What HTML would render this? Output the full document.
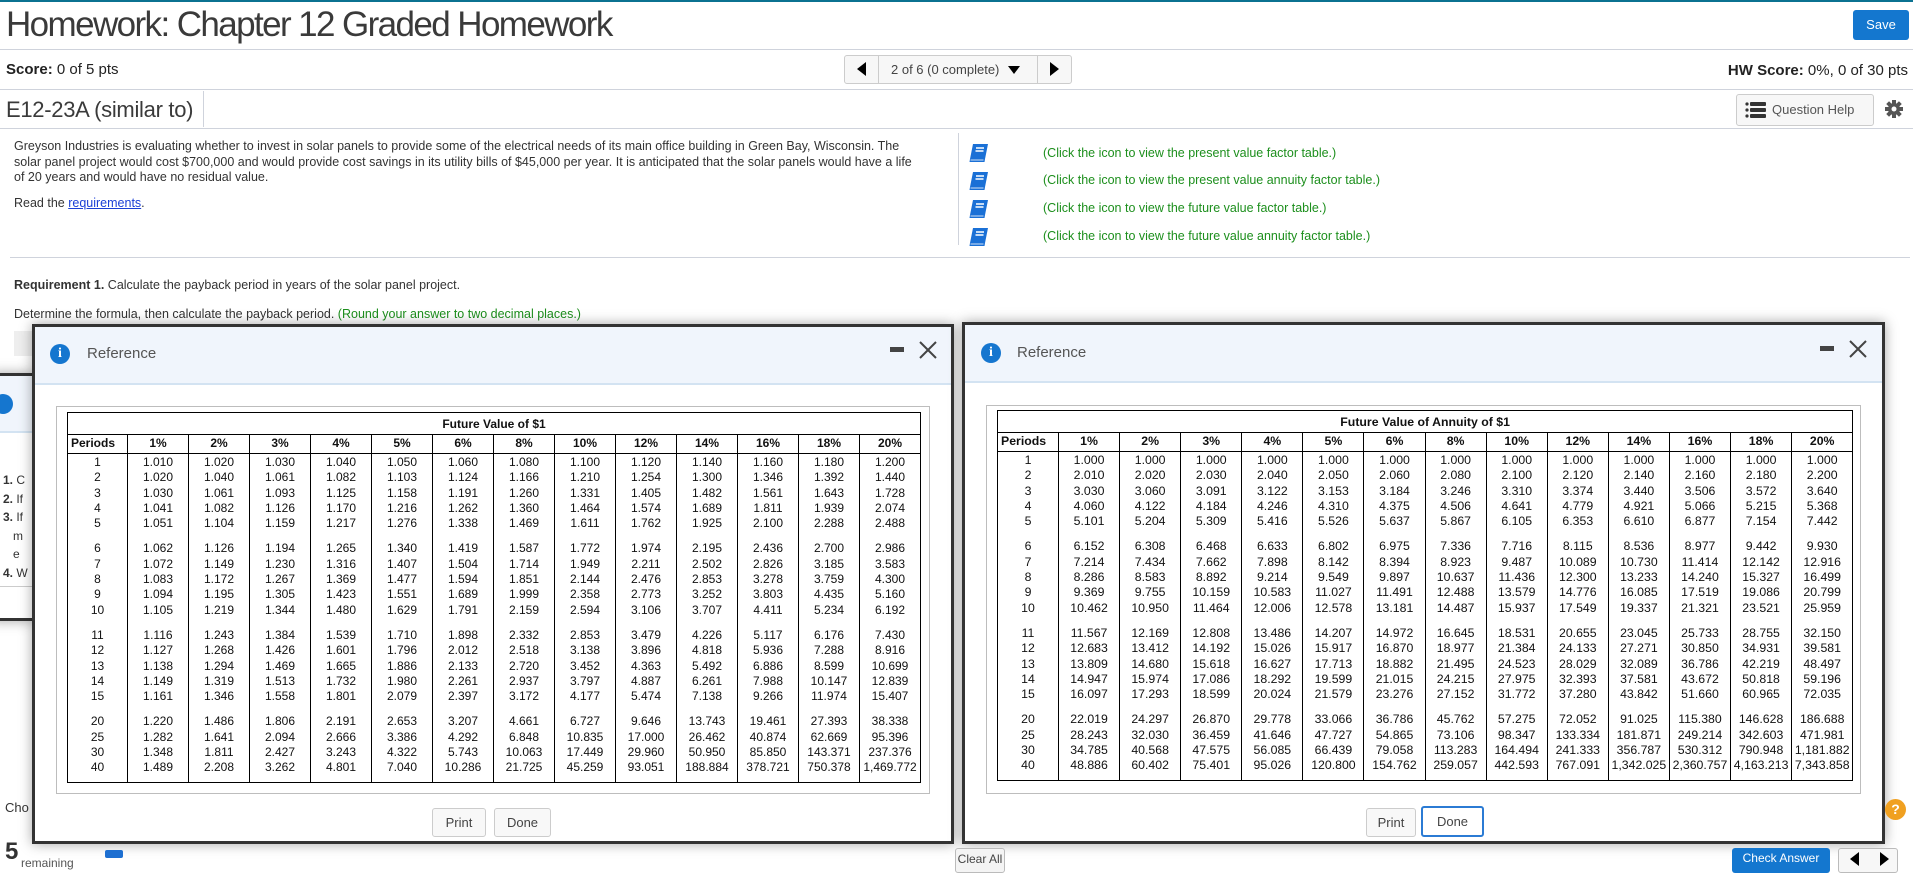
<!DOCTYPE html>
<html><head><meta charset="utf-8">
<style>
*{box-sizing:border-box;margin:0;padding:0}
body{width:1913px;height:869px;position:relative;overflow:hidden;background:#fff;font-family:"Liberation Sans",Arial,sans-serif;color:#333}
.a{position:absolute}
.hl{position:absolute;left:0;width:1913px;height:1px;background:#cfd3dc}
.modal{position:absolute;background:#fff;border:3px solid #333;box-shadow:0 0 12px rgba(0,0,0,.35)}
.mh{position:absolute;left:0;right:0;top:0;height:58px;background:#f0f5fc;border-bottom:2px solid #d3e3f2}
.info{position:absolute;width:20px;height:20px;border-radius:50%;background:#1576cf;color:#fff;font:bold 14px "Liberation Serif",serif;text-align:center;line-height:20px}
.ref{position:absolute;font-size:15px;color:#555}
.gbox{position:absolute;border:1px solid #bdbdbd;background:#fff}
table.t{position:absolute;border-collapse:collapse;table-layout:fixed;border:1.5px solid #000}
table.t td{border-left:1px solid #000;border-right:1px solid #000;text-align:center;vertical-align:top;color:#111;padding:5px 0;white-space:nowrap}
table.t tr.ti td{font-weight:bold;height:22px;padding:4px 0 0;border-bottom:1px solid #000}
table.t tr.hd td{font-weight:bold;height:19px;padding:1px 0 0;border-bottom:1px solid #000}
.btn{position:absolute;border:1px solid #ccc;background:#f8f8f8;border-radius:3px;font-size:13px;color:#444;text-align:center;line-height:27px;height:29px}
.green{position:absolute;color:#1d8f1d;font-size:12.5px}
.book{position:absolute;width:22px;height:20px}
</style></head><body>
<div class="a" style="left:0;top:0;width:1913px;height:2px;background:#0b7291"></div>
<div class="a" style="left:6px;top:5px;font-size:35px;color:#3a3a3a;letter-spacing:-1.6px">Homework: Chapter 12 Graded Homework</div>
<div class="a" style="left:1853px;top:10px;width:56px;height:30px;background:#1477cf;border-radius:3px;color:#fff;font-size:13px;text-align:center;line-height:30px">Save</div>
<div class="hl" style="top:49px"></div>
<div class="a" style="left:6px;top:61px;font-size:15px;color:#222"><b>Score:</b> 0 of 5 pts</div>
<div class="a" style="left:844px;top:55px;width:228px;height:29px;border:1px solid #ccc;border-radius:3px;background:#f7f7f7"></div>
<div class="a" style="left:878px;top:56px;width:1px;height:27px;background:#ccc"></div>
<div class="a" style="left:1037px;top:56px;width:1px;height:27px;background:#ccc"></div>
<div class="a" style="left:857px;top:62px;width:0;height:0;border-top:7px solid transparent;border-bottom:7px solid transparent;border-right:9px solid #000"></div>
<div class="a" style="left:1050px;top:62px;width:0;height:0;border-top:7px solid transparent;border-bottom:7px solid transparent;border-left:9px solid #000"></div>
<div class="a" style="left:891px;top:62px;font-size:13px;color:#444">2 of 6 (0 complete)</div>
<div class="a" style="left:1008px;top:66px;width:0;height:0;border-left:6px solid transparent;border-right:6px solid transparent;border-top:8px solid #000"></div>
<div class="a" style="right:5px;top:62px;font-size:15px;color:#222"><b>HW Score:</b> 0%, 0 of 30 pts</div>
<div class="hl" style="top:89px"></div>
<div class="a" style="left:6px;top:97px;font-size:22px;color:#3a3a3a;letter-spacing:-0.3px">E12-23A (similar to)</div>
<div class="a" style="left:203px;top:91px;width:1px;height:36px;background:#cfd3dc"></div>
<div class="a" style="left:1736px;top:94px;width:138px;height:32px;border:1px solid #ccc;border-radius:3px;background:#f7f7f7"></div>
<svg class="a" style="left:1745px;top:102px" width="22" height="16"><g fill="#333"><circle cx="2" cy="2" r="1.6"/><circle cx="2" cy="8" r="1.6"/><circle cx="2" cy="14" r="1.6"/><rect x="5" y="0" width="16" height="4" rx="1"/><rect x="5" y="6" width="16" height="4" rx="1"/><rect x="5" y="12" width="16" height="4" rx="1"/></g></svg>
<div class="a" style="left:1772px;top:102px;font-size:13px;color:#555">Question Help</div>
<svg class="a" style="left:1885px;top:100px" width="18" height="18" viewBox="0 0 18 18"><g fill="#555"><circle cx="9" cy="9" r="6"/><rect x="7" y="0" width="4" height="18"/><rect x="0" y="7" width="18" height="4"/><rect x="7" y="0" width="4" height="18" transform="rotate(45 9 9)"/><rect x="7" y="0" width="4" height="18" transform="rotate(-45 9 9)"/></g><circle cx="9" cy="9" r="2.5" fill="#fff"/></svg>
<div class="hl" style="top:128px"></div>
<div class="a" style="left:14px;top:139px;width:960px;font-size:12.5px;line-height:15.5px;color:#333;white-space:nowrap">Greyson Industries is evaluating whether to invest in solar panels to provide some of the electrical needs of its main office building in Green Bay, Wisconsin. The<br>solar panel project would cost $700,000 and would provide cost savings in its utility bills of $45,000 per year. It is anticipated that the solar panels would have a life<br>of 20 years and would have no residual value.</div>
<div class="a" style="left:14px;top:196px;font-size:12.5px;color:#333">Read the <span style="color:#1a3fd6;text-decoration:underline">requirements</span>.</div>
<div class="a" style="left:958px;top:133px;width:1px;height:112px;background:#cfd3dc"></div>
<svg class="book" style="left:968px;top:143px" viewBox="0 0 22 20"><path d="M5 1h15l-3 15H2z" fill="#1a70d6"/><path d="M2 16h15l-.5 3H1.5z" fill="#1a70d6"/><path d="M2.5 17h13" stroke="#fff" stroke-width=".8"/><path d="M8 5h8M7.5 8h8" stroke="#fff" stroke-width="1.5"/></svg>
<svg class="book" style="left:968px;top:171px" viewBox="0 0 22 20"><path d="M5 1h15l-3 15H2z" fill="#1a70d6"/><path d="M2 16h15l-.5 3H1.5z" fill="#1a70d6"/><path d="M2.5 17h13" stroke="#fff" stroke-width=".8"/><path d="M8 5h8M7.5 8h8" stroke="#fff" stroke-width="1.5"/></svg>
<svg class="book" style="left:968px;top:199px" viewBox="0 0 22 20"><path d="M5 1h15l-3 15H2z" fill="#1a70d6"/><path d="M2 16h15l-.5 3H1.5z" fill="#1a70d6"/><path d="M2.5 17h13" stroke="#fff" stroke-width=".8"/><path d="M8 5h8M7.5 8h8" stroke="#fff" stroke-width="1.5"/></svg>
<svg class="book" style="left:968px;top:227px" viewBox="0 0 22 20"><path d="M5 1h15l-3 15H2z" fill="#1a70d6"/><path d="M2 16h15l-.5 3H1.5z" fill="#1a70d6"/><path d="M2.5 17h13" stroke="#fff" stroke-width=".8"/><path d="M8 5h8M7.5 8h8" stroke="#fff" stroke-width="1.5"/></svg>
<div class="green" style="left:1043px;top:146px">(Click the icon to view the present value factor table.)</div>
<div class="green" style="left:1043px;top:173px">(Click the icon to view the present value annuity factor table.)</div>
<div class="green" style="left:1043px;top:201px">(Click the icon to view the future value factor table.)</div>
<div class="green" style="left:1043px;top:229px">(Click the icon to view the future value annuity factor table.)</div>
<div class="a" style="left:10px;top:257px;width:1900px;height:1px;background:#cfd3dc"></div>
<div class="a" style="left:14px;top:278px;font-size:12.5px;color:#333"><b>Requirement 1.</b> Calculate the payback period in years of the solar panel project.</div>
<div class="a" style="left:14px;top:307px;font-size:12.5px;color:#333">Determine the formula, then calculate the payback period. <span style="color:#1d8f1d">(Round your answer to two decimal places.)</span></div>
<div class="a" style="left:14px;top:331px;width:20px;height:25px;background:#eee"></div>

<!-- behind modal -->
<div class="modal" style="left:-10px;top:373px;width:45px;height:248px;border-width:3px">
 <div class="mh" style="height:57px"></div>
 <div class="info" style="left:0;top:18px"></div>
 <div class="a" style="left:10px;top:95px;font-size:12px;line-height:18.5px;color:#333"><b>1.</b> C<br><b>2.</b> If<br><b>3.</b> If<br>&nbsp;&nbsp;&nbsp;m<br>&nbsp;&nbsp;&nbsp;e<br><b>4.</b> W</div>
 <div class="a" style="left:0;top:210px;width:40px;height:1px;background:#ccc"></div>
</div>

<!-- left modal -->
<div class="modal" style="left:32px;top:324px;width:922px;height:520px">
 <div class="mh"></div>
 <div class="info" style="left:15px;top:17px">i</div>
 <div class="ref" style="left:52px;top:18px">Reference</div>
 <div class="a" style="left:855px;top:20px;width:14px;height:5px;background:#444"></div>
 <svg class="a" style="left:884px;top:14px" width="18" height="18"><path d="M1 1L17 17M17 1L1 17" stroke="#444" stroke-width="2"/></svg>
 <div class="btn" style="left:397px;top:481px;width:54px">Print</div>
 <div class="btn" style="left:459px;top:481px;width:57px">Done</div>
</div>
<div class="gbox" style="left:56px;top:406px;width:874px;height:388px"></div>
<div id="t1"></div>

<!-- right modal -->
<div class="modal" style="left:962px;top:322px;width:923px;height:522px">
 <div class="mh"></div>
 <div class="info" style="left:16px;top:18px">i</div>
 <div class="ref" style="left:52px;top:19px">Reference</div>
 <div class="a" style="left:855px;top:21px;width:14px;height:5px;background:#444"></div>
 <svg class="a" style="left:884px;top:15px" width="18" height="18"><path d="M1 1L17 17M17 1L1 17" stroke="#444" stroke-width="2"/></svg>
 <div class="btn" style="left:401px;top:483px;width:50px">Print</div>
 <div class="btn" style="left:456px;top:481px;width:63px;height:31px;border:2px solid #2b7bd4;background:#fff">Done</div>
</div>
<div class="gbox" style="left:986px;top:405px;width:875px;height:389px"></div>
<div id="t2"></div>

<!-- bottom -->
<div class="a" style="left:5px;top:800px;font-size:13px;color:#333">Cho</div>
<div class="a" style="left:1885px;top:799px;width:21px;height:21px;border-radius:50%;background:#f0a020;color:#fff;font-size:14px;font-weight:bold;text-align:center;line-height:21px">?</div>
<div class="a" style="left:5px;top:838px;font-size:24px;font-weight:bold;color:#333">5</div>
<div class="a" style="left:21px;top:856px;font-size:12px;color:#555">remaining</div>
<div class="a" style="left:105px;top:850px;width:18px;height:8px;background:#1d6fd1;border-radius:2px"></div>
<div class="a" style="left:955px;top:848px;width:50px;height:25px;border:1px solid #bbb;background:#f4f4f4;border-radius:3px;font-size:12px;color:#444;text-align:center;line-height:20px;overflow:hidden">Clear All</div>
<div class="a" style="left:1732px;top:848px;width:98px;height:25px;background:#1477cf;border-radius:3px;color:#fff;font-size:12px;text-align:center;line-height:20px;overflow:hidden">Check Answer</div>
<div class="a" style="left:1838px;top:848px;width:60px;height:25px;border:1px solid #bbb;background:#f7f7f7;border-radius:3px"></div>
<div class="a" style="left:1850px;top:852px;width:0;height:0;border-top:7px solid transparent;border-bottom:7px solid transparent;border-right:9px solid #000"></div>
<div class="a" style="left:1880px;top:852px;width:0;height:0;border-top:7px solid transparent;border-bottom:7px solid transparent;border-left:9px solid #000"></div>

<script>
var P=[1,2,3,4,5,6,7,8,9,10,11,12,13,14,15,20,25,30,40];
var R=["1%","2%","3%","4%","5%","6%","8%","10%","12%","14%","16%","18%","20%"];
var A=`1.010 1.020 1.030 1.040 1.050 1.060 1.080 1.100 1.120 1.140 1.160 1.180 1.200
1.020 1.040 1.061 1.082 1.103 1.124 1.166 1.210 1.254 1.300 1.346 1.392 1.440
1.030 1.061 1.093 1.125 1.158 1.191 1.260 1.331 1.405 1.482 1.561 1.643 1.728
1.041 1.082 1.126 1.170 1.216 1.262 1.360 1.464 1.574 1.689 1.811 1.939 2.074
1.051 1.104 1.159 1.217 1.276 1.338 1.469 1.611 1.762 1.925 2.100 2.288 2.488
1.062 1.126 1.194 1.265 1.340 1.419 1.587 1.772 1.974 2.195 2.436 2.700 2.986
1.072 1.149 1.230 1.316 1.407 1.504 1.714 1.949 2.211 2.502 2.826 3.185 3.583
1.083 1.172 1.267 1.369 1.477 1.594 1.851 2.144 2.476 2.853 3.278 3.759 4.300
1.094 1.195 1.305 1.423 1.551 1.689 1.999 2.358 2.773 3.252 3.803 4.435 5.160
1.105 1.219 1.344 1.480 1.629 1.791 2.159 2.594 3.106 3.707 4.411 5.234 6.192
1.116 1.243 1.384 1.539 1.710 1.898 2.332 2.853 3.479 4.226 5.117 6.176 7.430
1.127 1.268 1.426 1.601 1.796 2.012 2.518 3.138 3.896 4.818 5.936 7.288 8.916
1.138 1.294 1.469 1.665 1.886 2.133 2.720 3.452 4.363 5.492 6.886 8.599 10.699
1.149 1.319 1.513 1.732 1.980 2.261 2.937 3.797 4.887 6.261 7.988 10.147 12.839
1.161 1.346 1.558 1.801 2.079 2.397 3.172 4.177 5.474 7.138 9.266 11.974 15.407
1.220 1.486 1.806 2.191 2.653 3.207 4.661 6.727 9.646 13.743 19.461 27.393 38.338
1.282 1.641 2.094 2.666 3.386 4.292 6.848 10.835 17.000 26.462 40.874 62.669 95.396
1.348 1.811 2.427 3.243 4.322 5.743 10.063 17.449 29.960 50.950 85.850 143.371 237.376
1.489 2.208 3.262 4.801 7.040 10.286 21.725 45.259 93.051 188.884 378.721 750.378 1,469.772`;
var B=`1.000 1.000 1.000 1.000 1.000 1.000 1.000 1.000 1.000 1.000 1.000 1.000 1.000
2.010 2.020 2.030 2.040 2.050 2.060 2.080 2.100 2.120 2.140 2.160 2.180 2.200
3.030 3.060 3.091 3.122 3.153 3.184 3.246 3.310 3.374 3.440 3.506 3.572 3.640
4.060 4.122 4.184 4.246 4.310 4.375 4.506 4.641 4.779 4.921 5.066 5.215 5.368
5.101 5.204 5.309 5.416 5.526 5.637 5.867 6.105 6.353 6.610 6.877 7.154 7.442
6.152 6.308 6.468 6.633 6.802 6.975 7.336 7.716 8.115 8.536 8.977 9.442 9.930
7.214 7.434 7.662 7.898 8.142 8.394 8.923 9.487 10.089 10.730 11.414 12.142 12.916
8.286 8.583 8.892 9.214 9.549 9.897 10.637 11.436 12.300 13.233 14.240 15.327 16.499
9.369 9.755 10.159 10.583 11.027 11.491 12.488 13.579 14.776 16.085 17.519 19.086 20.799
10.462 10.950 11.464 12.006 12.578 13.181 14.487 15.937 17.549 19.337 21.321 23.521 25.959
11.567 12.169 12.808 13.486 14.207 14.972 16.645 18.531 20.655 23.045 25.733 28.755 32.150
12.683 13.412 14.192 15.026 15.917 16.870 18.977 21.384 24.133 27.271 30.850 34.931 39.581
13.809 14.680 15.618 16.627 17.713 18.882 21.495 24.523 28.029 32.089 36.786 42.219 48.497
14.947 15.974 17.086 18.292 19.599 21.015 24.215 27.975 32.393 37.581 43.672 50.818 59.196
16.097 17.293 18.599 20.024 21.579 23.276 27.152 31.772 37.280 43.842 51.660 60.965 72.035
22.019 24.297 26.870 29.778 33.066 36.786 45.762 57.275 72.052 91.025 115.380 146.628 186.688
28.243 32.030 36.459 41.646 47.727 54.865 73.106 98.347 133.334 181.871 249.214 342.603 471.981
34.785 40.568 47.575 56.085 66.439 79.058 113.283 164.494 241.333 356.787 530.312 790.948 1,181.882
48.886 60.402 75.401 95.026 120.800 154.762 259.057 442.593 767.091 1,342.025 2,360.757 4,163.213 7,343.858`;
function build(id,txt,title,left,top,pw,cw,fs){
 var rows=txt.trim().split("\n").map(function(l){return l.trim().split(/\s+/)});
 var groups=[[0,5],[5,10],[10,15],[15,19]];
 var h='<table class="t" style="left:'+left+'px;top:'+top+'px;width:'+(pw+13*cw)+'px;font-size:'+fs+'px;line-height:15.3px"><colgroup><col style="width:'+pw+'px">';
 for(var i=0;i<13;i++)h+='<col style="width:'+cw+'px">';
 h+='</colgroup><tr class="ti"><td colspan="14" style="border-left:none;border-right:none">'+title+'</td></tr><tr class="hd"><td style="text-align:left;padding-left:3px">Periods</td>';
 R.forEach(function(r){h+='<td>'+r+'</td>'});
 h+='</tr>';
 groups.forEach(function(g,gi){
  var pad=(gi==0?'1px 0 5px':(gi==3?'5px 0 6px':'5px 0'));
  h+='<tr><td style="padding:'+pad+'">'+P.slice(g[0],g[1]).join('<br>')+'</td>';
  for(var c=0;c<13;c++){var v=[];for(var r=g[0];r<g[1];r++)v.push(rows[r][c]);h+='<td style="padding:'+pad+'">'+v.join('<br>')+'</td>'}
  h+='</tr>';
 });
 h+='</table>';
 document.getElementById(id).innerHTML=h;
}
build("t1",A,"Future Value of $1",67,412,60,61,12);
build("t2",B,"Future Value of Annuity of $1",997,410,61,61.1,12.3);
</script>
</body></html>
